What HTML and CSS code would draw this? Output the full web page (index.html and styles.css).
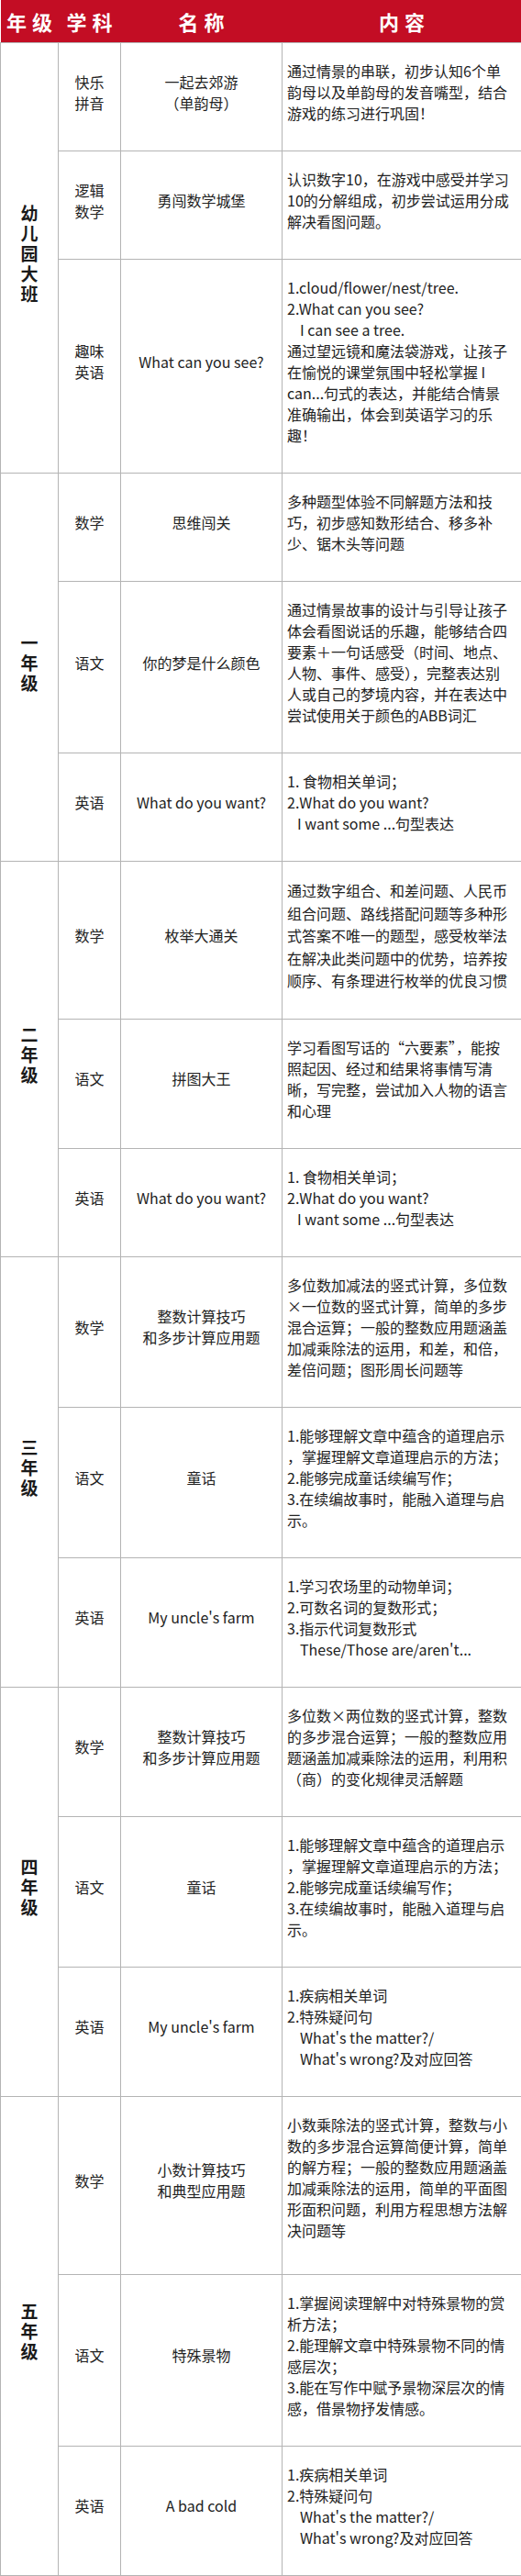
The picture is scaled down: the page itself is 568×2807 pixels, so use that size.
FILE: index.html
```html
<!DOCTYPE html>
<html lang="zh-CN">
<head>
<meta charset="utf-8">
<title>课程内容</title>
<link rel="stylesheet" href="styles.css">
</head>
<body>
<table class="plan">
  <colgroup>
    <col class="c1"><col class="c2"><col class="c3"><col class="c4">
  </colgroup>
  <thead>
    <tr><th>年级</th><th>学科</th><th>名称</th><th>内容</th></tr>
  </thead>
  <tbody>
    <tr>
      <td class="grade" rowspan="3">幼<br>儿<br>园<br>大<br>班</td>
      <td class="subj">快乐<br>拼音</td>
      <td class="name">一起去郊游<br>（单韵母）</td>
      <td class="desc">通过情景的串联，初步认知6个单<br>韵母以及单韵母的发音嘴型，结合<br>游戏的练习进行巩固！</td>
    </tr>
    <tr>
      <td class="subj">逻辑<br>数学</td>
      <td class="name">勇闯数学城堡</td>
      <td class="desc">认识数字10，在游戏中感受并学习<br>10的分解组成，初步尝试运用分成<br>解决看图问题。</td>
    </tr>
    <tr>
      <td class="subj">趣味<br>英语</td>
      <td class="name">What can you see?</td>
      <td class="desc">1.cloud/flower/nest/tree.<br>2.What can you see?<br><span class="ind">I can see a tree.</span><br>通过望远镜和魔法袋游戏，让孩子<br>在愉悦的课堂氛围中轻松掌握 I<br>can...句式的表达，并能结合情景<br>准确输出，体会到英语学习的乐<br>趣！</td>
    </tr>

    <tr>
      <td class="grade" rowspan="3">一<br>年<br>级</td>
      <td class="subj">数学</td>
      <td class="name">思维闯关</td>
      <td class="desc">多种题型体验不同解题方法和技<br>巧，初步感知数形结合、移多补<br>少、锯木头等问题</td>
    </tr>
    <tr>
      <td class="subj">语文</td>
      <td class="name">你的梦是什么颜色</td>
      <td class="desc">通过情景故事的设计与引导让孩子<br>体会看图说话的乐趣，能够结合四<br>要素＋一句话感受（时间、地点、<br>人物、事件、感受），完整表达别<br>人或自己的梦境内容，并在表达中<br>尝试使用关于颜色的ABB词汇</td>
    </tr>
    <tr>
      <td class="subj">英语</td>
      <td class="name">What do you want?</td>
      <td class="desc">1. 食物相关单词；<br>2.What do you want?<br><span class="ind-s">I want some ...句型表达</span></td>
    </tr>

    <tr>
      <td class="grade" rowspan="3">二<br>年<br>级</td>
      <td class="subj">数学</td>
      <td class="name">枚举大通关</td>
      <td class="desc loose">通过数字组合、和差问题、人民币<br>组合问题、路线搭配问题等多种形<br>式答案不唯一的题型，感受枚举法<br>在解决此类问题中的优势，培养按<br>顺序、有条理进行枚举的优良习惯</td>
    </tr>
    <tr>
      <td class="subj">语文</td>
      <td class="name">拼图大王</td>
      <td class="desc">学习看图写话的“六要素”，能按<br>照起因、经过和结果将事情写清<br>晰，写完整，尝试加入人物的语言<br>和心理</td>
    </tr>
    <tr>
      <td class="subj">英语</td>
      <td class="name">What do you want?</td>
      <td class="desc">1. 食物相关单词；<br>2.What do you want?<br><span class="ind-s">I want some ...句型表达</span></td>
    </tr>

    <tr>
      <td class="grade" rowspan="3">三<br>年<br>级</td>
      <td class="subj">数学</td>
      <td class="name">整数计算技巧<br>和多步计算应用题</td>
      <td class="desc">多位数加减法的竖式计算，多位数<br>×一位数的竖式计算，简单的多步<br>混合运算；一般的整数应用题涵盖<br>加减乘除法的运用，和差，和倍，<br>差倍问题；图形周长问题等</td>
    </tr>
    <tr>
      <td class="subj">语文</td>
      <td class="name">童话</td>
      <td class="desc">1.能够理解文章中蕴含的道理启示<br>，掌握理解文章道理启示的方法；<br>2.能够完成童话续编写作；<br>3.在续编故事时，能融入道理与启<br>示。</td>
    </tr>
    <tr>
      <td class="subj">英语</td>
      <td class="name">My uncle's farm</td>
      <td class="desc">1.学习农场里的动物单词；<br>2.可数名词的复数形式；<br>3.指示代词复数形式<br><span class="ind">These/Those are/aren't...</span></td>
    </tr>

    <tr>
      <td class="grade" rowspan="3">四<br>年<br>级</td>
      <td class="subj">数学</td>
      <td class="name">整数计算技巧<br>和多步计算应用题</td>
      <td class="desc">多位数×两位数的竖式计算，整数<br>的多步混合运算；一般的整数应用<br>题涵盖加减乘除法的运用，利用积<br>（商）的变化规律灵活解题</td>
    </tr>
    <tr>
      <td class="subj">语文</td>
      <td class="name">童话</td>
      <td class="desc">1.能够理解文章中蕴含的道理启示<br>，掌握理解文章道理启示的方法；<br>2.能够完成童话续编写作；<br>3.在续编故事时，能融入道理与启<br>示。</td>
    </tr>
    <tr>
      <td class="subj">英语</td>
      <td class="name">My uncle's farm</td>
      <td class="desc">1.疾病相关单词<br>2.特殊疑问句<br><span class="ind">What's the matter?/</span><br><span class="ind">What's wrong?及对应回答</span></td>
    </tr>

    <tr>
      <td class="grade" rowspan="3">五<br>年<br>级</td>
      <td class="subj">数学</td>
      <td class="name">小数计算技巧<br>和典型应用题</td>
      <td class="desc tall">小数乘除法的竖式计算，整数与小<br>数的多步混合运算简便计算，简单<br>的解方程；一般的整数应用题涵盖<br>加减乘除法的运用，简单的平面图<br>形面积问题，利用方程思想方法解<br>决问题等</td>
    </tr>
    <tr>
      <td class="subj">语文</td>
      <td class="name">特殊景物</td>
      <td class="desc">1.掌握阅读理解中对特殊景物的赏<br>析方法；<br>2.能理解文章中特殊景物不同的情<br>感层次；<br>3.能在写作中赋予景物深层次的情<br>感，借景物抒发情感。</td>
    </tr>
    <tr>
      <td class="subj">英语</td>
      <td class="name">A bad cold</td>
      <td class="desc">1.疾病相关单词<br>2.特殊疑问句<br><span class="ind">What's the matter?/</span><br><span class="ind">What's wrong?及对应回答</span></td>
    </tr>
  </tbody>
</table>
</body>
</html>
```
FILE: styles.css
```css
html, body {
  margin: 0;
  padding: 0;
  background: #ffffff;
}

body {
  font-family: "Noto Sans CJK SC", "Noto Sans", sans-serif;
  color: #222222;
}

.plan {
  width: 568px;
  border-collapse: collapse;
  table-layout: fixed;
}

.c1 { width: 63px; }
.c2 { width: 68px; }
.c3 { width: 176px; }
.c4 { width: 261px; }

.plan th {
  background: #c30d24;
  color: #ffffff;
  height: 46px;
  padding: 0 0 0 6px;
  font-size: 22px;
  line-height: 46px;
  font-weight: 700;
  letter-spacing: 6px;
  text-align: center;
  border: none;
}

.plan td {
  border: 1px solid #b4b4b4;
  padding: 19px 4px 29px;
  font-size: 16px;
  line-height: 23px;
  vertical-align: middle;
}

.plan td.grade {
  font-weight: 700;
  font-size: 19px;
  line-height: 22px;
  text-align: center;
  color: #1a1a1a;
}

.plan td.subj,
.plan td.name {
  text-align: center;
}

.plan td.desc {
  text-align: left;
  white-space: nowrap;
  padding-left: 5px;
}

.plan td.loose {
  line-height: 24.5px;
}

.plan td.tall {
  padding-bottom: 36px;
}

.ind {
  padding-left: 14px;
}

.ind-s {
  padding-left: 11px;
}
```
